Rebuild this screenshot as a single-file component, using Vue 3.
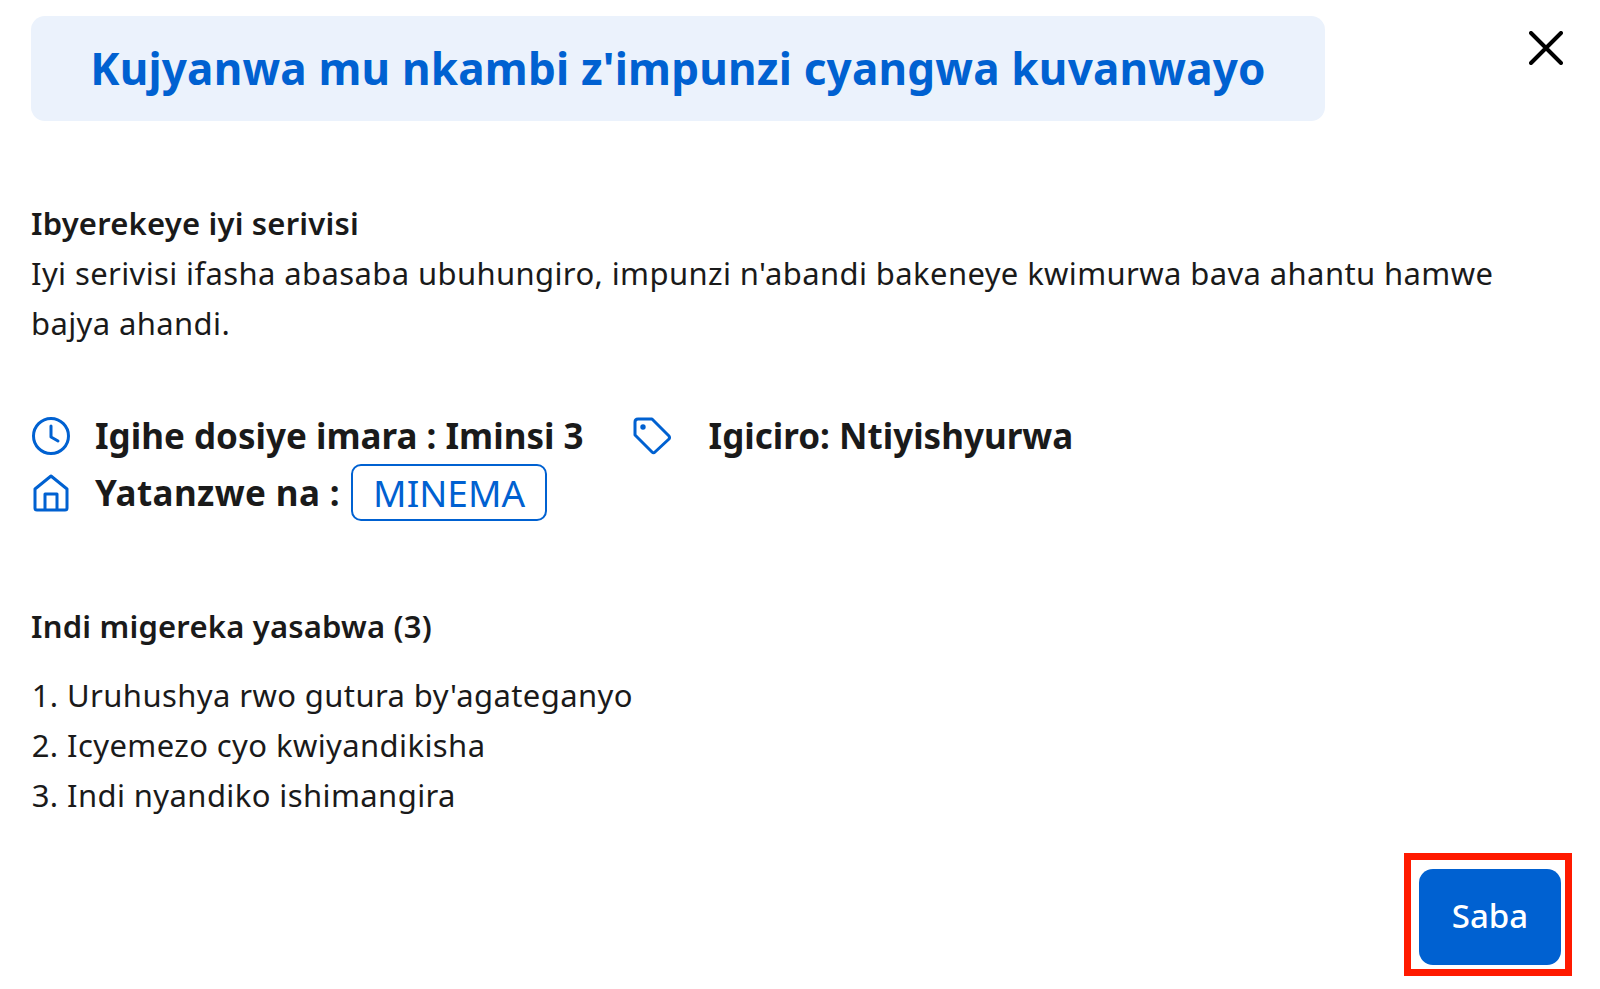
<script setup>
const docs = ['Uruhushya rwo gutura by\'agateganyo', 'Icyemezo cyo kwiyandikisha', 'Indi nyandiko ishimangira']
</script>

<template>
  <div class="modal">
    <header class="head">
      <h1 class="title">Kujyanwa mu nkambi z'impunzi cyangwa kuvanwayo</h1>
      <button class="close" aria-label="Close">
        <svg width="34" height="34" viewBox="0 0 34 34" fill="none" stroke="#000" stroke-width="4" stroke-linecap="round">
          <path d="M2 2 L32 32 M32 2 L2 32" />
        </svg>
      </button>
    </header>

    <section class="about">
      <h2 class="label">Ibyerekeye iyi serivisi</h2>
      <p>Iyi serivisi ifasha abasaba ubuhungiro, impunzi n'abandi bakeneye kwimurwa bava ahantu hamwe bajya ahandi.</p>
    </section>

    <section class="facts">
      <div class="fact-row">
        <svg class="ico clock" width="40" height="40" viewBox="0 0 40 40" fill="none" stroke="#0061d1" stroke-width="3" stroke-linecap="round" stroke-linejoin="round">
          <circle cx="20" cy="20" r="17.500" />
          <path d="M20 10 V21 L27 25" />
        </svg>
        <span class="fact">Igihe dosiye imara : Iminsi 3</span>
        <svg class="ico tag" width="38" height="38" viewBox="0 0 38 38" fill="none" stroke="#0061d1" stroke-width="3" stroke-linejoin="round">
          <path d="M2 5 Q2 2 5 2 H19 L36 19 Q37 20.500 36 22 L22 35 Q20.500 36.500 19 35 L2 18 Z" />
          <circle cx="10" cy="10" r="1.200" fill="#0061d1" />
        </svg>
        <span class="fact">Igiciro: Ntiyishyurwa</span>
      </div>
      <div class="fact-row second">
        <svg class="ico home" width="36" height="38" viewBox="0 0 36 38" fill="none" stroke="#0061d1" stroke-width="3" stroke-linejoin="round">
          <path d="M2 15 L18 2 L34 15 V34 Q34 36 32 36 H4 Q2 36 2 34 Z" />
          <path d="M12 36 V20 H24 V36" />
        </svg>
        <span class="fact wide">Yatanzwe na :</span>
        <span class="pill">MINEMA</span>
      </div>
    </section>

    <section class="docs">
      <h2 class="label">Indi migereka yasabwa (3)</h2>
      <ol>
        <li v-for="d in docs" :key="d">{{ d }}</li>
      </ol>
    </section>

    <footer class="foot">
      <div class="frame">
        <button class="submit">Saba</button>
      </div>
    </footer>
  </div>
</template>

<style>
html, body { background: #fff; }
</style>

<style scoped>
.modal {
  height: 989px;
  box-sizing: border-box;
  padding: 16px 28px 13px 31px;
  font-family: "Noto Sans", Lato, sans-serif;
  color: #1a1a1a;
  display: flex;
  flex-direction: column;
}

.head {
  display: flex;
  justify-content: space-between;
  align-items: flex-start;
}

.title {
  margin: 0;
  width: 1294px;
  height: 105px;
  box-sizing: border-box;
  background: #ebf2fc;
  border-radius: 14px;
  color: #0061d1;
  font-size: 44px;
  font-weight: 700;
  letter-spacing: 0.2px;
  line-height: 105px;
  text-align: center;
  white-space: nowrap;
}

.close {
  margin: 15px 9px 0 0;
  padding: 0;
  border: 0;
  background: none;
  width: 34px;
  height: 34px;
}

.about {
  margin-top: 77px;
  font-size: 31px;
  letter-spacing: 0.38px;
  line-height: 50px;
}

.label {
  margin: 0;
  font-size: 31px;
  font-weight: 600;
  letter-spacing: 0.2px;
  line-height: 50px;
}

.about p {
  margin: 0;
}

.facts {
  margin-top: 59px;
}

.fact-row {
  display: flex;
  align-items: center;
  height: 57px;
}

.fact {
  font-size: 35px;
  font-weight: 700;
}

.wide {
  letter-spacing: 0.4px;
}

.ico {
  flex: none;
}

.clock {
  margin-right: 24px;
}

.tag {
  margin: 0 38px 0 49px;
}

.home {
  margin: 0 26px 0 2px;
}

.pill {
  margin-left: 11px;
  height: 57px;
  box-sizing: border-box;
  padding: 0 20px;
  border: 2px solid #0061d1;
  border-radius: 10px;
  color: #0061d1;
  font-size: 37px;
  line-height: 53px;
}

.docs {
  margin-top: 80px;
  font-size: 31px;
  letter-spacing: 0.4px;
}

.docs ol {
  margin: 19px 0 0;
  padding: 0 0 0 36px;
  line-height: 50px;
}

.foot {
  margin-top: auto;
  display: flex;
  justify-content: flex-end;
}

.frame {
  width: 168px;
  height: 123px;
  box-sizing: border-box;
  border: 7px solid #ff1a00;
  padding: 9px 4px 4px 8px;
}

.submit {
  display: block;
  width: 142px;
  height: 96px;
  padding: 0 0 4px;
  border: 0;
  border-radius: 14px;
  background: #0061d1;
  color: #fff;
  font-family: inherit;
  font-size: 33px;
  font-weight: 500;
}
</style>
